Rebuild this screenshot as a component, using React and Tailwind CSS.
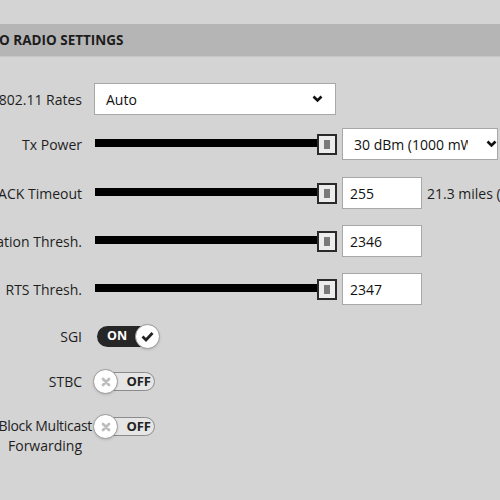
import React from 'react';

const font = { fontFamily: '"Open Sans", "Noto Sans", sans-serif' };

const Chevron = () => (
  <svg width="11" height="8" viewBox="0 0 11 8">
    <polyline points="1.5,1.5 5.5,5.5 9.5,1.5" fill="none" stroke="#111" strokeWidth="2.6" />
  </svg>
);

const Slider = () => (
  <div className="relative w-[242px] h-[21px] ml-[1px] shrink-0">
    <div className="absolute left-0 right-[14px] top-[5px] h-[8px] bg-black" />
    <div className="absolute right-0 top-0 w-[20px] h-[21px] border-2 border-[#2a2a2a] bg-[#ececec] flex items-center justify-center">
      <div className="w-[6px] h-[9px] bg-[#7a7a7a]" />
    </div>
  </div>
);

const Label = ({ children }) => (
  <div className="w-[200px] shrink-0 text-right text-[14px] text-[#1e1e1e] whitespace-nowrap pr-[12px]">{children}</div>
);

const Input = ({ value }) => (
  <div className="w-[80px] h-[32px] shrink-0 bg-white border border-[#a8a8a8] flex items-center pl-[7px] text-[14px] text-[#111]">{value}</div>
);

const ToggleOn = () => (
  <div className="relative w-[63px] h-[25px] shrink-0">
    <div className="absolute left-0 top-[2px] w-[54px] h-[21px] rounded-full bg-[#262626] flex items-center pl-[10px]">
      <span className="text-[12.5px] font-bold text-white">ON</span>
    </div>
    <div className="absolute right-0 top-0 w-[25px] h-[25px] rounded-full bg-white border border-[#9a9a9a] flex items-center justify-center shadow">
      <svg width="13" height="11" viewBox="0 0 13 11">
        <polyline points="1.5,5.5 5,9 11.5,2" fill="none" stroke="#222" strokeWidth="2.8" />
      </svg>
    </div>
  </div>
);

const ToggleOff = () => (
  <div className="relative z-10 w-[62px] h-[25px] -ml-[1px] shrink-0">
    <div className="absolute left-[6px] top-[3px] w-[56px] h-[19px] rounded-full bg-[#e6e6e6] border border-[#8c8c8c] flex items-center justify-end pr-[3px]">
      <span className="text-[13px] font-bold text-[#222]">OFF</span>
    </div>
    <div className="absolute left-0 top-0 w-[25px] h-[25px] rounded-full bg-white border border-[#9a9a9a] flex items-center justify-center shadow">
      <svg width="10" height="10" viewBox="0 0 10 10">
        <path d="M2 2 L8 8 M8 2 L2 8" stroke="#bdbdbd" strokeWidth="2.8" strokeLinecap="round" />
      </svg>
    </div>
  </div>
);

export default function App() {
  return (
    <div className="w-[500px] h-[500px] bg-[#d4d4d4] overflow-hidden" style={font}>
      <div className="h-[24px]" />
      <div className="h-[33px] bg-[#b5b5b5] flex items-center border-b border-[#c6c6c6]">
        <span className="text-[13.5px] font-bold text-[#1c1c1c] whitespace-nowrap -ml-[1px]">O RADIO SETTINGS</span>
      </div>

      <div className="ml-[-106px] flex flex-col">
        <div className="mt-[26px] h-[32px] flex items-center">
          <Label>802.11 Rates</Label>
          <div className="w-[242px] h-[32px] shrink-0 bg-white border border-[#a8a8a8] flex items-center justify-between pl-[11px] pr-[12px] text-[14px] text-[#111]">
            <span>Auto</span>
            <Chevron />
          </div>
        </div>

        <div className="mt-[13px] h-[32px] flex items-center">
          <Label>Tx Power</Label>
          <Slider />
          <div className="ml-[5px] w-[156px] h-[32px] shrink-0 bg-white border border-[#a8a8a8] flex items-center pl-[11px] text-[14px] text-[#111]">
            <span className="w-[116px] overflow-hidden whitespace-nowrap">30 dBm (1000 mW)</span>
            <span className="ml-[18px]"><Chevron /></span>
          </div>
        </div>

        <div className="mt-[17px] h-[32px] flex items-center">
          <Label>ACK Timeout</Label>
          <Slider />
          <div className="ml-[5px]"><Input value="255" /></div>
          <span className="ml-[5px] text-[14px] text-[#1e1e1e] whitespace-nowrap shrink-0">21.3 miles (34.3 km)</span>
        </div>

        <div className="mt-[16px] h-[32px] flex items-center">
          <Label>Fragmentation Thresh.</Label>
          <Slider />
          <div className="ml-[5px]"><Input value="2346" /></div>
        </div>

        <div className="mt-[16px] h-[32px] flex items-center">
          <Label>RTS Thresh.</Label>
          <Slider />
          <div className="ml-[5px]"><Input value="2347" /></div>
        </div>

        <div className="mt-[19px] h-[25px] flex items-center">
          <Label>SGI</Label>
          <div className="ml-[3px]"><ToggleOn /></div>
        </div>

        <div className="mt-[20px] h-[25px] flex items-center">
          <Label>STBC</Label>
          <ToggleOff />
        </div>

        <div className="mt-[20px] flex items-start">
          <div className="w-[200px] shrink-0 text-right text-[14px] text-[#1e1e1e] leading-[20px] pt-[2px] pr-[12px]">
            <div className="whitespace-nowrap -mr-[10px] tracking-[-0.3px]">Block Multicast</div>
            <div className="whitespace-nowrap">Forwarding</div>
          </div>
          <ToggleOff />
        </div>
      </div>
    </div>
  );
}
